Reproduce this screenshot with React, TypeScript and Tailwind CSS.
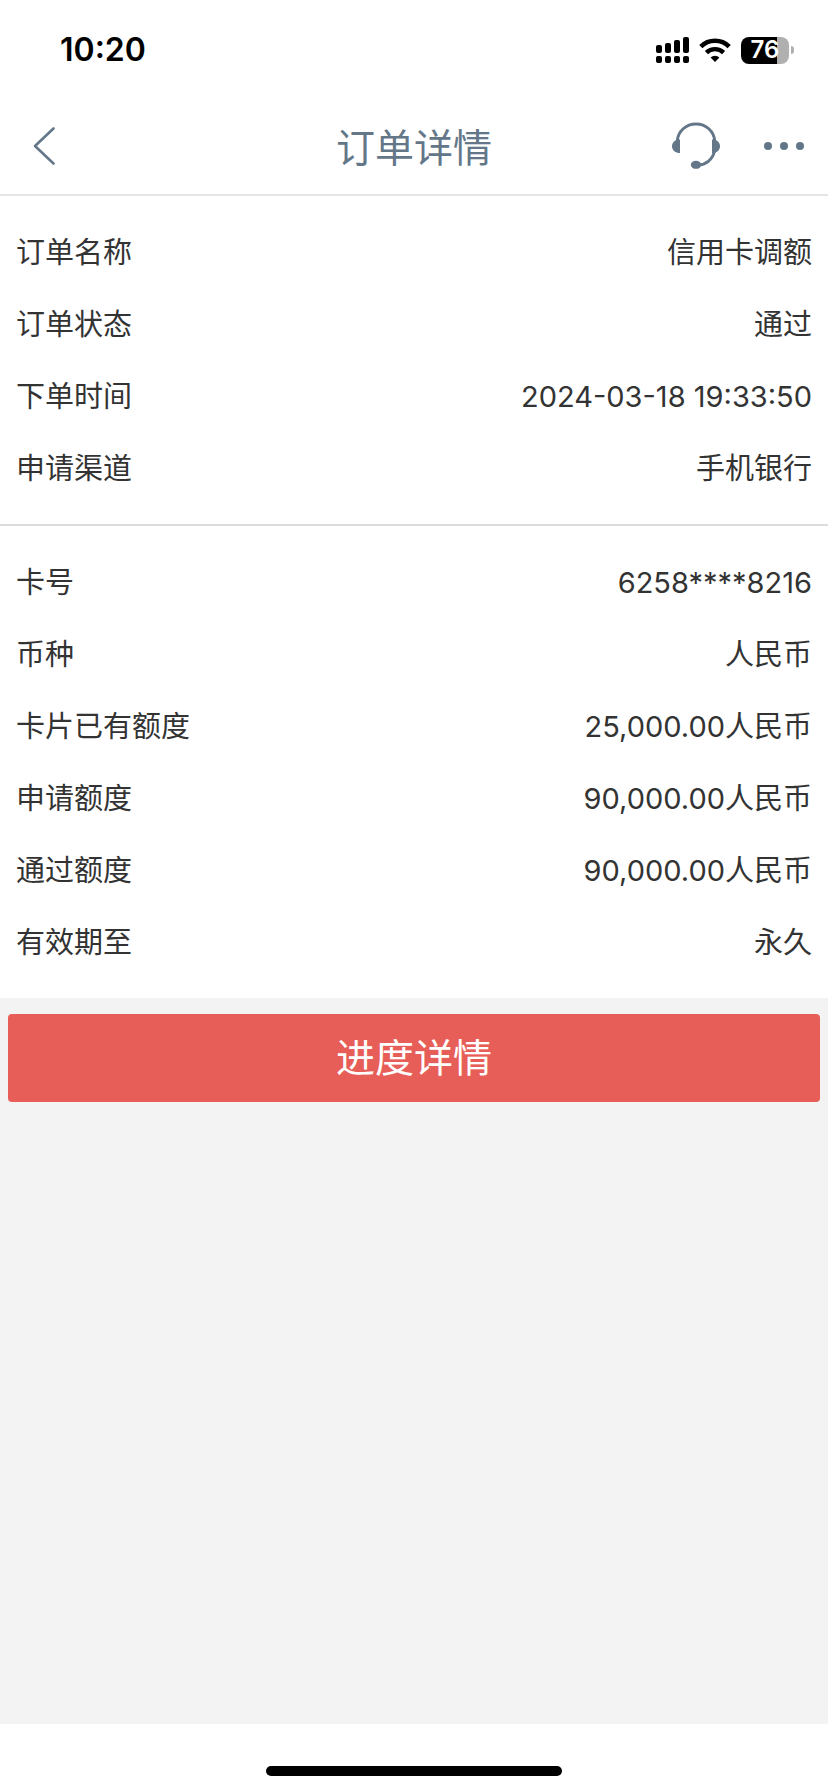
interface DetailItem {
  label: string;
  value: string;
}

const orderItems: DetailItem[] = [
  { label: '订单名称', value: '信用卡调额' },
  { label: '订单状态', value: '通过' },
  { label: '下单时间', value: '2024-03-18 19:33:50' },
  { label: '申请渠道', value: '手机银行' }
];

const cardItems: DetailItem[] = [
  { label: '卡号', value: '6258****8216' },
  { label: '币种', value: '人民币' },
  { label: '卡片已有额度', value: '25,000.00人民币' },
  { label: '申请额度', value: '90,000.00人民币' },
  { label: '通过额度', value: '90,000.00人民币' },
  { label: '有效期至', value: '永久' }
];

function SignalIcon() {
  return (
    <svg width="33" height="26" viewBox="0 0 33 26" fill="currentColor" aria-hidden="true">
      <rect x="0" y="8" width="6" height="8" rx="2" />
      <rect x="9" y="6" width="6" height="10" rx="2" />
      <rect x="18" y="3" width="6" height="13" rx="2" />
      <rect x="27" y="0" width="6" height="16" rx="2" />
      <rect x="0" y="19" width="6" height="7" rx="2" />
      <rect x="9" y="19" width="6" height="7" rx="2" />
      <rect x="18" y="19" width="6" height="7" rx="2" />
      <rect x="27" y="19" width="6" height="7" rx="2" />
    </svg>
  );
}

function WifiIcon() {
  return (
    <svg width="32" height="24" viewBox="0 0 32 24" aria-hidden="true">
      <path d="M1.8 8.6 a20.2 20.2 0 0 1 28.4 0" fill="none" stroke="currentColor" strokeWidth="4.6" />
      <path d="M7.4 14.6 a12.3 12.3 0 0 1 17.2 0" fill="none" stroke="currentColor" strokeWidth="4.4" />
      <path d="M16 24 L11.6 19.6 a6.4 6.4 0 0 1 8.8 0 Z" fill="currentColor" />
    </svg>
  );
}

function HeadsetIcon() {
  return (
    <svg width="48" height="48" viewBox="0 0 48 48" aria-hidden="true">
      <g fill="none" stroke="currentColor" strokeWidth="3">
        <path d="M5.2 19 C6.2 9 14 2 24 2 S41.8 9 42.8 19" />
        <path d="M42.6 29 C40.4 38 33.5 42.8 26 43" />
      </g>
      <path d="M8 17.5 V31 C3.5 31 0 28.4 0 24.2 S3.5 17.5 8 17.5 Z" fill="currentColor" />
      <path d="M40 17.5 V31 C44.5 31 48 28.4 48 24.2 S44.5 17.5 40 17.5 Z" fill="currentColor" />
      <ellipse cx="24" cy="42.8" rx="5.2" ry="4" fill="currentColor" />
    </svg>
  );
}

function StatusBar() {
  return (
    <div className="flex h-[98px] items-center justify-between pt-0.5 pr-[34px] pl-[60px] text-black">
      <span className="text-[32px] leading-10 font-semibold">10:20</span>
      <div className="flex items-center gap-2.5">
        <SignalIcon />
        <WifiIcon />
        <div className="flex items-center gap-0.5">
          <span className="flex h-[27px] w-12 items-center justify-center rounded-lg bg-[linear-gradient(90deg,#000_75%,#b0b0b0_75%)] text-2xl font-semibold text-white">
            76
          </span>
          <span className="h-2 w-[3px] rounded-r-full bg-[#b0b0b0]" />
        </div>
      </div>
    </div>
  );
}

function NavBar() {
  return (
    <header className="grid h-[98px] grid-cols-[1fr_auto_1fr] items-center border-b-2 border-[#e5e5e5] px-6 text-[#637789]">
      <button type="button" aria-label="返回" className="justify-self-start px-2">
        <svg width="24" height="40" viewBox="0 0 24 40" fill="none" stroke="currentColor" strokeWidth="2.6" strokeLinecap="round" strokeLinejoin="round" aria-hidden="true">
          <path d="M21.5 2.5 L3 20 L21.5 37.5" />
        </svg>
      </button>
      <h1 className="pt-1 text-[39px] leading-[48px]">订单详情</h1>
      <div className="flex items-center gap-11 justify-self-end">
        <button type="button" aria-label="客服">
          <HeadsetIcon />
        </button>
        <button type="button" aria-label="更多">
          <svg width="40" height="8" viewBox="0 0 40 8" fill="currentColor" aria-hidden="true">
            <circle cx="4" cy="4" r="4" />
            <circle cx="20" cy="4" r="4" />
            <circle cx="36" cy="4" r="4" />
          </svg>
        </button>
      </div>
    </header>
  );
}

function DetailList({ items }: { items: DetailItem[] }) {
  return (
    <dl className="bg-white px-4 py-5 text-[29px] text-[#333333]">
      {items.map((item) => (
        <div key={item.label} className="flex h-[72px] items-center justify-between pt-px">
          <dt>{item.label}</dt>
          <dd>{item.value}</dd>
        </div>
      ))}
    </dl>
  );
}

export default function App() {
  return (
    <div
      lang="zh-CN"
      className="flex min-h-screen flex-col bg-white font-['Inter','Noto_Sans_CJK_SC',sans-serif]"
    >
      <StatusBar />
      <NavBar />
      <main className="flex-1 bg-[#f3f3f3]">
        <DetailList items={orderItems} />
        <hr className="border-t-2 border-[#dcdcdc]" />
        <DetailList items={cardItems} />
        <div className="px-2 py-4">
          <button
            type="button"
            className="h-[88px] w-full rounded bg-[#e75e58] text-[39px] text-white"
          >
            进度详情
          </button>
        </div>
      </main>
      <footer className="flex h-[68px] items-end justify-center pb-4">
        <div className="h-[10px] w-[296px] rounded-full bg-black" />
      </footer>
    </div>
  );
}
